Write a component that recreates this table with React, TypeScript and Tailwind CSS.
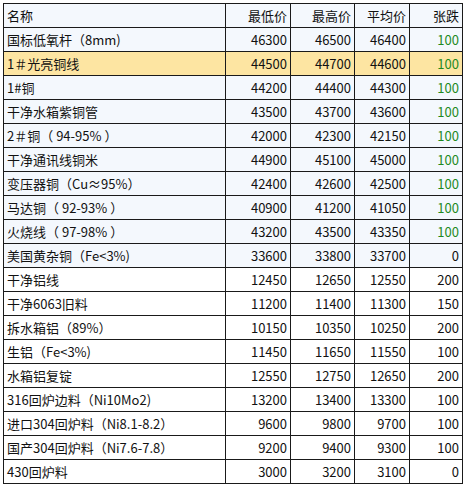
import React from "react";

type Row = {
  name: string;
  low: string;
  high: string;
  avg: string;
  change: string;
  green?: boolean;
  highlight?: boolean;
  tint?: boolean;
};

const rows: Row[] = [
  { name: "国标低氧杆（8mm)", low: "46300", high: "46500", avg: "46400", change: "100", green: true, tint: true },
  { name: "1＃光亮铜线", low: "44500", high: "44700", avg: "44600", change: "100", green: true, highlight: true },
  { name: "1#铜", low: "44200", high: "44400", avg: "44300", change: "100", green: true, tint: true },
  { name: "干净水箱紫铜管", low: "43500", high: "43700", avg: "43600", change: "100", green: true, tint: true },
  { name: "2＃铜（ 94-95% ）", low: "42000", high: "42300", avg: "42150", change: "100", green: true, tint: true },
  { name: "干净通讯线铜米", low: "44900", high: "45100", avg: "45000", change: "100", green: true, tint: true },
  { name: "变压器铜（Cu≈95%）", low: "42400", high: "42600", avg: "42500", change: "100", green: true, tint: true },
  { name: "马达铜（ 92-93% ）", low: "40900", high: "41200", avg: "41050", change: "100", green: true, tint: true },
  { name: "火烧线（ 97-98% ）", low: "43200", high: "43500", avg: "43350", change: "100", green: true, tint: true },
  { name: "美国黄杂铜（Fe<3%)", low: "33600", high: "33800", avg: "33700", change: "0", tint: true },
  { name: "干净铝线", low: "12450", high: "12650", avg: "12550", change: "200" },
  { name: "干净6063旧料", low: "11200", high: "11400", avg: "11300", change: "150" },
  { name: "拆水箱铝（89%）", low: "10150", high: "10350", avg: "10250", change: "200" },
  { name: "生铝（Fe<3%)", low: "11450", high: "11650", avg: "11550", change: "100" },
  { name: "水箱铝复锭", low: "12550", high: "12750", avg: "12650", change: "200" },
  { name: "316回炉边料（Ni10Mo2)", low: "13200", high: "13400", avg: "13300", change: "100" },
  { name: "进口304回炉料（Ni8.1-8.2）", low: "9600", high: "9800", avg: "9700", change: "100" },
  { name: "国产304回炉料（Ni7.6-7.8）", low: "9200", high: "9400", avg: "9300", change: "100" },
  { name: "430回炉料", low: "3000", high: "3200", avg: "3100", change: "0" },
];

const cell = "h-[24px] border-r border-b border-[#1a1a1a] flex items-center whitespace-pre overflow-hidden";
const num = `${cell} justify-end pr-[3px]`;

export default function App() {
  return (
    <div className="w-[471px] h-[484px] bg-white pt-[3px] pl-[3px] font-['Noto_Sans_CJK_SC',sans-serif] text-[13px] text-[#111]">
      <div className="grid grid-cols-[222px_65px_64px_55px_53px] w-fit border-l border-t border-[#1a1a1a]">
        {/* 表头 */}
        <div className={`${cell} pl-[3px] bg-[#f4f8fd]`}>名称</div>
        <div className={`${num} bg-[#f4f8fd]`}>最低价</div>
        <div className={`${num} bg-[#f4f8fd]`}>最高价</div>
        <div className={`${num} bg-[#f4f8fd]`}>平均价</div>
        <div className={`${num} bg-[#f4f8fd]`}>张跌</div>

        {rows.map((r) => {
          const bg = r.highlight ? "bg-[#fde5a2]" : r.tint ? "bg-[#f4f8fd]" : "bg-white";
          return (
            <React.Fragment key={r.name}>
              <div className={`${cell} pl-[3px] ${bg}`}>{r.name}</div>
              <div className={`${num} ${bg}`}>{r.low}</div>
              <div className={`${num} ${bg}`}>{r.high}</div>
              <div className={`${num} ${bg}`}>{r.avg}</div>
              <div className={`${num} ${bg} ${r.green ? "text-[#1f8a1f]" : ""}`}>{r.change}</div>
            </React.Fragment>
          );
        })}
      </div>
    </div>
  );
}
